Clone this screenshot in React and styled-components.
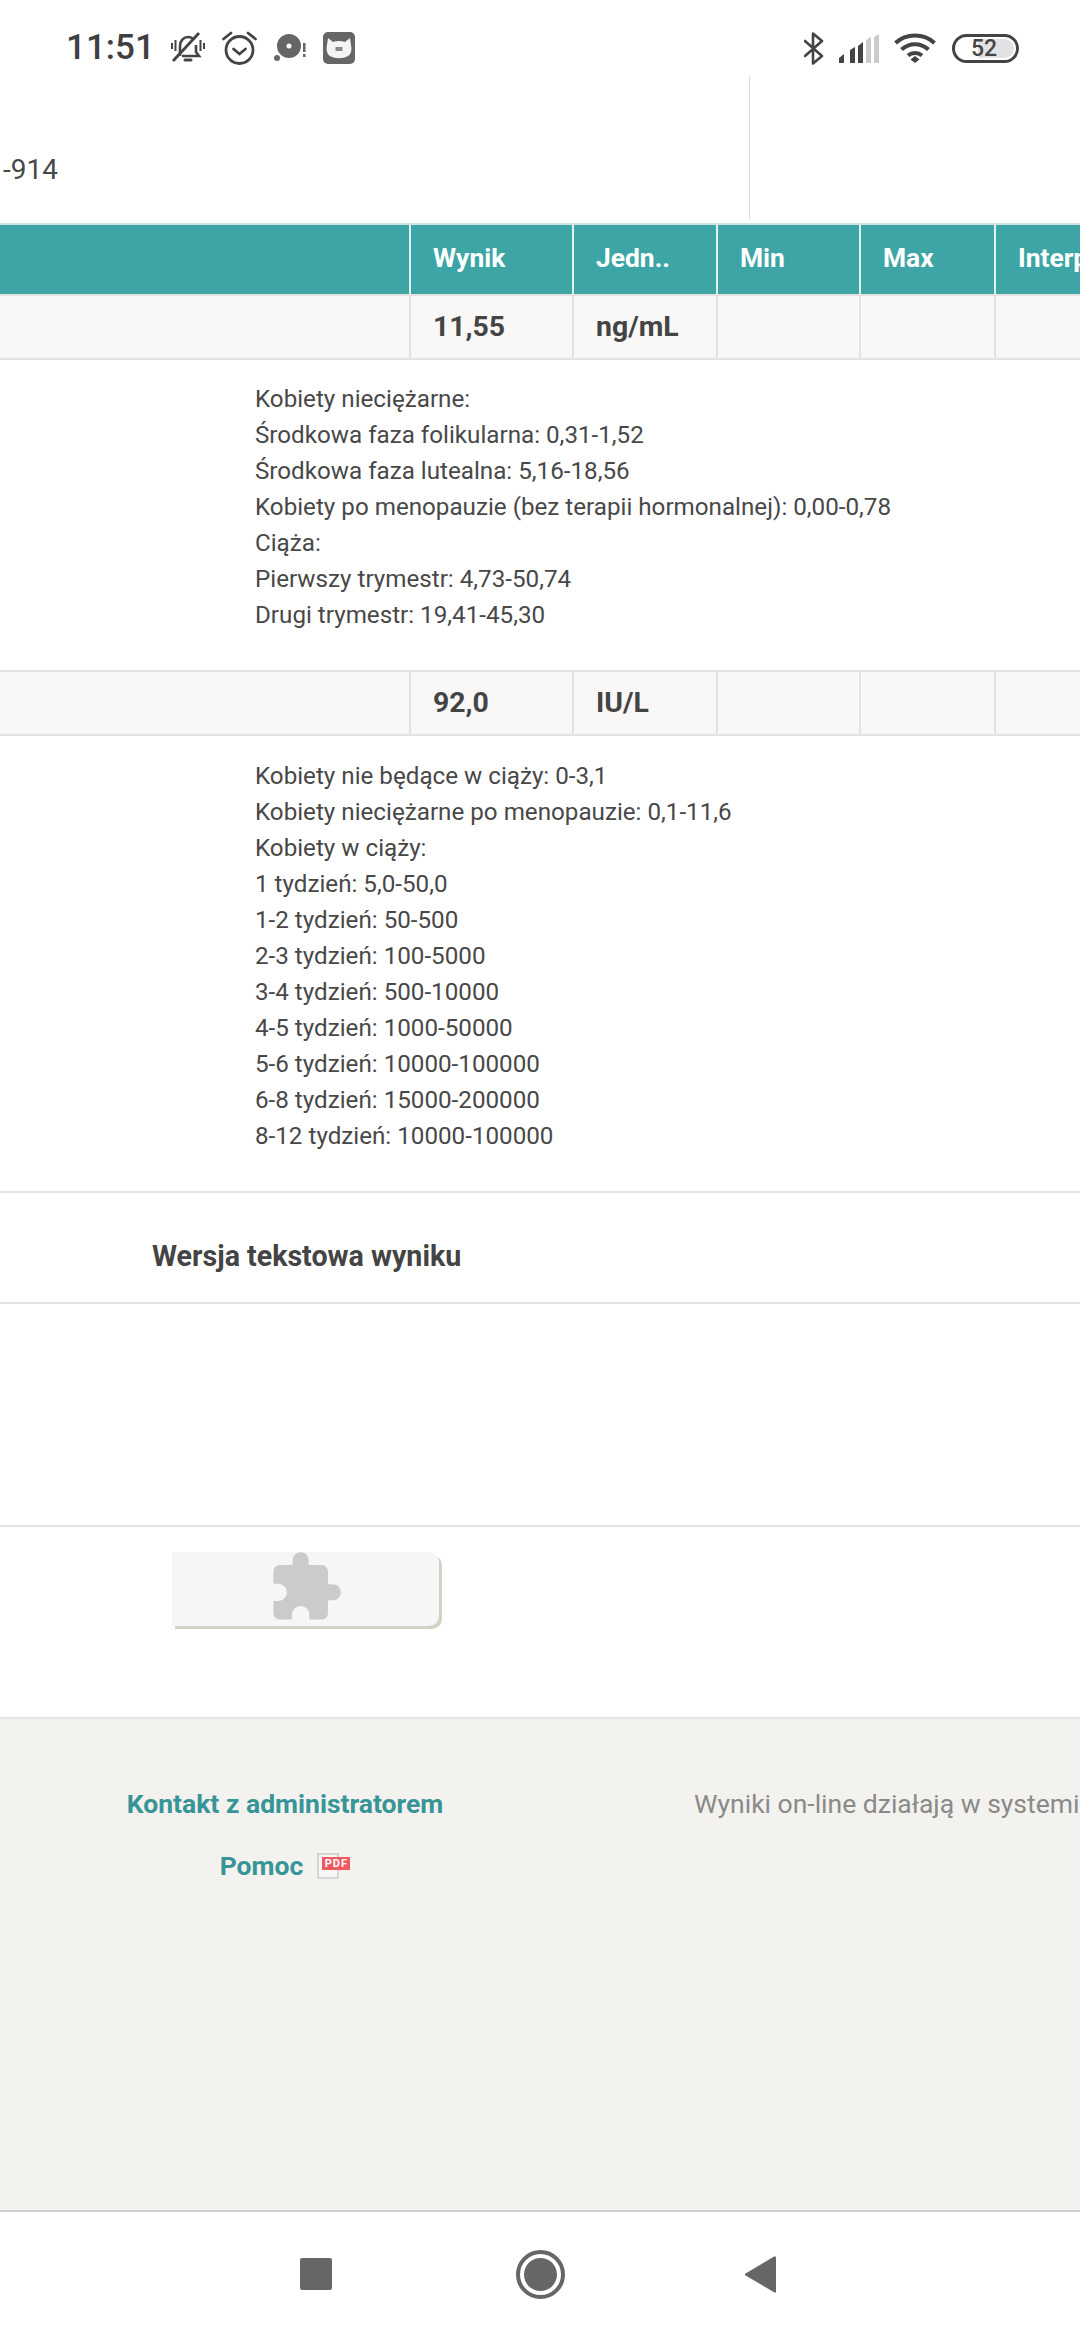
import React from "react";
import styled, { createGlobalStyle } from "styled-components";

const COLUMNS = "411px 163px 144px 143px 135px 1fr";

const results = [
  {
    value: "11,55",
    unit: "ng/mL",
    note: [
      "Kobiety nieciężarne:",
      "Środkowa faza folikularna: 0,31-1,52",
      "Środkowa faza lutealna: 5,16-18,56",
      "Kobiety po menopauzie (bez terapii hormonalnej): 0,00-0,78",
      "Ciąża:",
      "Pierwszy trymestr: 4,73-50,74",
      "Drugi trymestr: 19,41-45,30",
    ],
  },
  {
    value: "92,0",
    unit: "IU/L",
    note: [
      "Kobiety nie będące w ciąży: 0-3,1",
      "Kobiety nieciężarne po menopauzie: 0,1-11,6",
      "Kobiety w ciąży:",
      "1 tydzień: 5,0-50,0",
      "1-2 tydzień: 50-500",
      "2-3 tydzień: 100-5000",
      "3-4 tydzień: 500-10000",
      "4-5 tydzień: 1000-50000",
      "5-6 tydzień: 10000-100000",
      "6-8 tydzień: 15000-200000",
      "8-12 tydzień: 10000-100000",
    ],
  },
];

function App() {
  return (
    <Page>
      <GlobalStyle />
      <StatusBar>
        <StatusLeft>
          <Time>11:51</Time>
          <BellIcon />
          <AlarmIcon />
          <DiscIcon />
          <MiIcon />
        </StatusLeft>
        <StatusRight>
          <BluetoothIcon />
          <SignalIcon />
          <WifiIcon />
          <Battery>
            <BatteryFill />
            <BatteryText>52</BatteryText>
          </Battery>
        </StatusRight>
      </StatusBar>

      <TopInfo>
        <OrderNumber>-914</OrderNumber>
        <TopDivider />
      </TopInfo>

      <HeaderRow>
        <HeaderCell />
        <HeaderCell>Wynik</HeaderCell>
        <HeaderCell>Jedn..</HeaderCell>
        <HeaderCell>Min</HeaderCell>
        <HeaderCell>Max</HeaderCell>
        <HeaderCell>Interpretacja</HeaderCell>
      </HeaderRow>

      {results.map((r, i) => (
        <React.Fragment key={r.unit}>
          <ValueRow>
            <ValueCell />
            <ValueCell>{r.value}</ValueCell>
            <ValueCell>{r.unit}</ValueCell>
            <ValueCell />
            <ValueCell />
            <ValueCell />
          </ValueRow>
          <Note $last={i === results.length - 1}>
            {r.note.map((line) => (
              <div key={line}>{line}</div>
            ))}
          </Note>
        </React.Fragment>
      ))}

      <SectionTitle>Wersja tekstowa wyniku</SectionTitle>
      <EmptySection />

      <PluginSection>
        <PluginBox>
          <svg width="77" height="77" viewBox="0 0 24 24" fill="#cbcbcb">
            <path d="M20.5 11H19V7c0-1.1-.9-2-2-2h-4V3.5C13 2.12 11.88 1 10.5 1S8 2.12 8 3.5V5H4c-1.1 0-1.99.9-1.99 2v3.8H3.5c1.49 0 2.7 1.21 2.7 2.7s-1.21 2.7-2.7 2.7H2V20c0 1.1.9 2 2 2h3.8v-1.5c0-1.49 1.21-2.7 2.7-2.7 1.49 0 2.7 1.21 2.7 2.7V22H17c1.1 0 2-.9 2-2v-4h1.5c1.38 0 2.5-1.12 2.5-2.5S21.88 11 20.5 11z" />
          </svg>
        </PluginBox>
      </PluginSection>

      <Footer>
        <FooterLinks>
          <FooterLink>Kontakt z administratorem</FooterLink>
          <HelpRow>
            <FooterLink>Pomoc</FooterLink>
            <PdfIcon />
          </HelpRow>
        </FooterLinks>
        <FooterNote>Wyniki on-line działają w systemie</FooterNote>
      </Footer>

      <NavBar>
        <svg width="32" height="32" viewBox="0 0 32 32" fill="#666">
          <rect width="32" height="32" rx="2" />
        </svg>
        <HomeIcon width="49" height="49" viewBox="0 0 49 49" fill="#666">
          <circle cx="24.5" cy="24.5" r="22.5" fill="none" stroke="#666" strokeWidth="4" />
          <circle cx="24.5" cy="24.5" r="16.5" />
        </HomeIcon>
        <svg width="31" height="37" viewBox="0 0 31 37" fill="#666">
          <path d="M30 0.5a1 1 0 0 1 1 1v34a1 1 0 0 1-1.5 1L0.6 19.5a1 1 0 0 1 0-2L29 0.5z" />
        </svg>
      </NavBar>
    </Page>
  );
}

export default App;

function BellIcon() {
  return (
    <svg width="34" height="32" viewBox="0 0 34 32" fill="none" stroke="#444" strokeWidth="2.6">
      <path d="M9 24V14c0-5 3.5-9 8-9 2.5 0 4.5 1 6 3" />
      <path d="M25 13v7l3 4H11" />
      <path d="M14 28h6" strokeWidth="3" strokeLinecap="round" />
      <path d="M1 11v6M4.5 8v11M33 11v6M29.5 8v11" strokeWidth="2" />
      <path d="M28 1L2 29" strokeWidth="2.8" />
    </svg>
  );
}

function AlarmIcon() {
  return (
    <svg width="35" height="34" viewBox="0 0 35 34" fill="none" stroke="#444" strokeWidth="2.8" strokeLinecap="round">
      <circle cx="17.5" cy="19" r="13.5" />
      <path d="M11.5 18l6 5 6-5" />
      <path d="M1.5 8L9 2M33.5 8L26 2" />
    </svg>
  );
}

function DiscIcon() {
  return (
    <svg width="32" height="28" viewBox="0 0 32 28" fill="#666">
      <path fillRule="evenodd" d="M15 0a12 12 0 1 1 0 24a12 12 0 1 1 0-24zm0 9.5a2.5 2.5 0 1 0 0 5a2.5 2.5 0 1 0 0-5z" />
      <circle cx="3" cy="24" r="3" />
      <path d="M29 9h2.5v9H29zM29 20h2.5v3H29z" />
    </svg>
  );
}

function MiIcon() {
  return (
    <svg width="32" height="32" viewBox="0 0 32 32">
      <rect width="32" height="32" rx="5" fill="#666" />
      <path d="M5 6l5 4c3.5-1.5 8.5-1.5 12 0l5-4 1 7c1 5 0 9-3 11-5 3-13 3-18 0-3-2-4-6-3-11z" fill="#f4f4f4" />
      <rect x="12.5" y="15" width="7" height="4" fill="#888" />
    </svg>
  );
}

function BluetoothIcon() {
  return (
    <svg width="20" height="33" viewBox="0 0 20 33" fill="none" stroke="#444" strokeWidth="2.6" strokeLinejoin="round" strokeLinecap="round">
      <path d="M1 9l17 15-9 7.5V1.5L18 9 1 24" />
    </svg>
  );
}

function SignalIcon() {
  return (
    <svg width="40" height="29" viewBox="0 0 40 29">
      <path d="M0 29v-5l5-4v9z" fill="#444" />
      <path d="M11 29V16l5-3v16z" fill="#444" />
      <path d="M19 29V12l5-4v21z" fill="#444" />
      <path d="M27 29V6l5-3v26z" fill="#ccc" />
      <path d="M35 29V3l5-3v29z" fill="#ccc" />
    </svg>
  );
}

function WifiIcon() {
  return (
    <svg width="42" height="30" viewBox="0 0 42 30" fill="none" stroke="#444" strokeWidth="4">
      <path d="M1.5 10C12 0 30 0 40.5 10" />
      <path d="M7.5 16.5c8-7 19-7 27 0" />
      <path d="M14 22.5c4-3.5 10-3.5 14 0" />
      <path d="M21 23l4.5 3.5L21 30l-4.5-3.5z" fill="#444" stroke="none" />
    </svg>
  );
}

function PdfIcon() {
  return (
    <PdfBox>
      <PdfTag>PDF</PdfTag>
    </PdfBox>
  );
}

const GlobalStyle = createGlobalStyle`
  html, body {
    margin: 0;
    padding: 0;
    background: #fff;
  }
  body {
    font-family: Roboto, "Noto Sans", sans-serif;
    color: #444;
  }
`;

const Page = styled.div`
  width: 1080px;
  height: 2340px;
  overflow: hidden;
  display: flex;
  flex-direction: column;
  background: #fff;
`;

const StatusBar = styled.div`
  height: 76px;
  flex: none;
  display: flex;
  justify-content: space-between;
  padding: 30px 61px 0 66px;
  box-sizing: border-box;
`;

const StatusLeft = styled.div`
  display: flex;
  gap: 17px;
  height: 36px;
  align-items: center;
`;

const Time = styled.span`
  font-size: 35px;
  font-weight: 500;
  line-height: 36px;
  width: 88px;
  color: #3f3f3f;
`;

const StatusRight = styled.div`
  display: flex;
  align-items: center;
  gap: 15px;
  height: 36px;
`;

const Battery = styled.div`
  position: relative;
  width: 67px;
  height: 29px;
  box-sizing: border-box;
  border: 3.5px solid #444;
  border-radius: 15px;
  margin-left: 1px;
  display: flex;
  align-items: center;
  justify-content: center;
  overflow: hidden;
`;

const BatteryFill = styled.div`
  position: absolute;
  top: 2px;
  bottom: 2px;
  right: 2px;
  width: 36px;
  border-radius: 0 10px 10px 0;
  background: #e2e2e2;
`;

const BatteryText = styled.span`
  position: relative;
  font-size: 23px;
  font-weight: 500;
  color: #444;
  margin-left: -3px;
`;

const TopInfo = styled.div`
  height: 147px;
  flex: none;
  display: flex;
  justify-content: space-between;
  padding-left: 3px;
  padding-right: 330px;
`;

const OrderNumber = styled.div`
  font-size: 28px;
  line-height: 36px;
  margin-top: 76px;
  color: #484848;
`;

const TopDivider = styled.div`
  width: 1px;
  height: 144px;
  background: #ddd;
`;

const HeaderRow = styled.div`
  display: grid;
  grid-template-columns: ${COLUMNS};
  height: 71px;
  flex: none;
  background: #3da5a6;
  border-top: 2px solid #cfe3e2;
  box-sizing: border-box;
`;

const HeaderCell = styled.div`
  box-sizing: border-box;
  padding-left: 22px;
  font-size: 26.4px;
  font-weight: 700;
  line-height: 67px;
  color: #fff;
  white-space: nowrap;
  overflow: hidden;
  border-right: 2px solid #e4f1f1;
  &:last-child {
    border-right: 0;
  }
`;

const ValueRow = styled.div`
  display: grid;
  grid-template-columns: ${COLUMNS};
  height: 66px;
  flex: none;
  background: #f9f8f6;
  border-top: 2px solid #e3e3e1;
  border-bottom: 2px solid #e3e3e1;
  box-sizing: border-box;
`;

const ValueCell = styled.div`
  box-sizing: border-box;
  padding-left: 22px;
  font-size: 28.4px;
  font-weight: 700;
  line-height: 62px;
  color: #444;
  border-right: 2px solid #e3e3e1;
  &:last-child {
    border-right: 0;
  }
`;

const Note = styled.div`
  flex: none;
  box-sizing: border-box;
  padding: 21px 0 37px 255px;
  font-size: 24.2px;
  line-height: 36px;
  color: #484848;
  ${(p) => p.$last && "padding-top: 22px; padding-bottom: 37px;"}
`;

const SectionTitle = styled.div`
  flex: none;
  height: 113px;
  box-sizing: border-box;
  padding-left: 152px;
  border-top: 2px solid #e3e3e1;
  border-bottom: 2px solid #e3e3e1;
  font-size: 28.6px;
  font-weight: 700;
  line-height: 127px;
  color: #444;
  overflow: hidden;
`;

const EmptySection = styled.div`
  flex: none;
  height: 221px;
  border-bottom: 2px solid #e3e3e1;
`;

const PluginSection = styled.div`
  flex: none;
  height: 190px;
  box-sizing: border-box;
  padding: 25px 0 0 172px;
`;

const PluginBox = styled.div`
  width: 267px;
  height: 74px;
  display: flex;
  align-items: center;
  justify-content: center;
  background: #f6f6f6;
  border-radius: 0 10px 10px 0;
  box-shadow: 3px 3px 0 #d3d2c6;
  svg {
    margin-top: -3px;
  }
`;

const Footer = styled.div`
  flex: 1;
  display: flex;
  background: #f3f2ef;
  border-top: 1px solid #e5e4e0;
  box-shadow: inset 0 3px 3px -2px #e3e2de;
  overflow: hidden;
  white-space: nowrap;
`;

const FooterLinks = styled.div`
  width: 570px;
  flex: none;
  padding-top: 68px;
  display: flex;
  flex-direction: column;
  align-items: center;
  gap: 26px;
`;

const FooterLink = styled.div`
  font-size: 26.5px;
  font-weight: 700;
  line-height: 36px;
  color: #389597;
`;

const HelpRow = styled.div`
  display: flex;
  align-items: center;
  gap: 14px;
`;

const PdfBox = styled.div`
  position: relative;
  width: 22px;
  height: 26px;
  box-sizing: border-box;
  border: 2px solid #d5d5d3;
  background: #f7f7f5;
  margin-right: 11px;
`;

const PdfTag = styled.span`
  position: absolute;
  left: 3px;
  top: 2px;
  width: 28px;
  height: 13px;
  background: #ee5a60;
  color: #fff;
  font-size: 11px;
  font-weight: 700;
  line-height: 13px;
  text-align: center;
  letter-spacing: 1px;
`;

const FooterNote = styled.div`
  margin: 68px 0 0 124px;
  font-size: 26.5px;
  line-height: 36px;
  color: #8a8a8a;
`;

const NavBar = styled.div`
  flex: none;
  height: 130px;
  box-sizing: border-box;
  border-top: 2px solid #cfcfcf;
  background: #fff;
  display: flex;
  align-items: center;
  justify-content: space-between;
  padding: 0 304px 4px 300px;
`;

const HomeIcon = styled.svg`
  margin-left: 4px;
`;
